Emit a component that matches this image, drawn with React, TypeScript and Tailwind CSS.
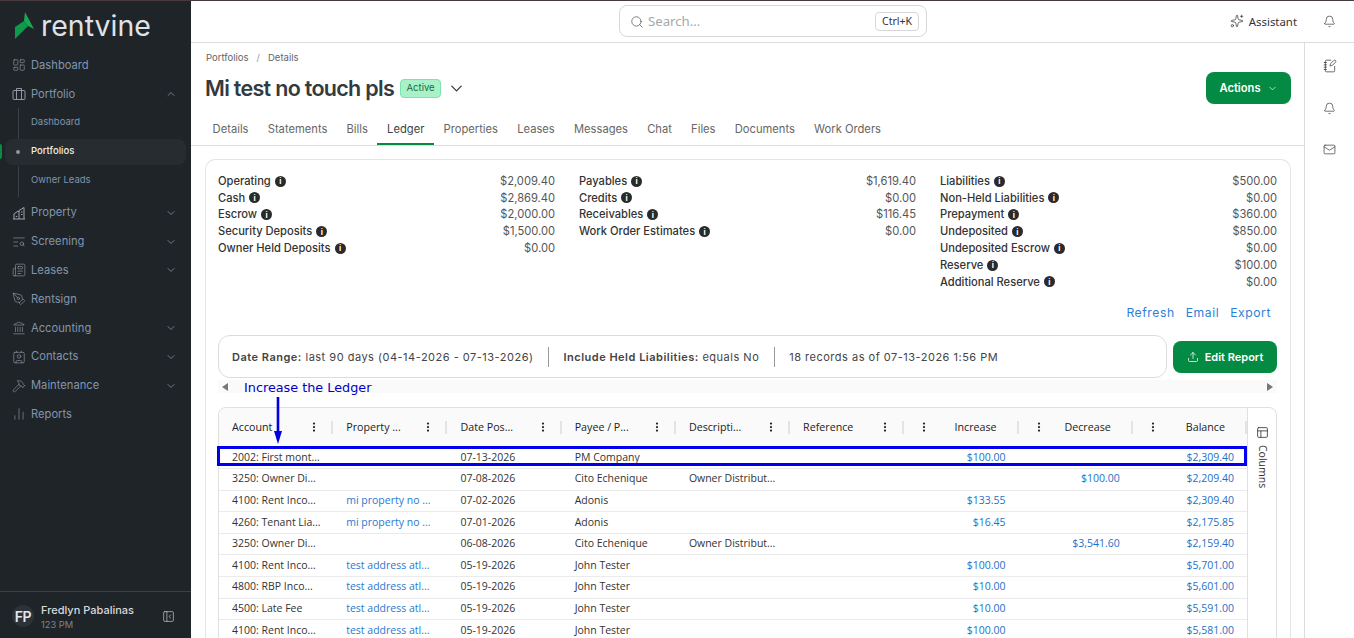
import React from "react";
import {
  LayoutDashboard, ChevronUp, ChevronDown, TextSearch, Newspaper, PenTool, Landmark, Contact, Hammer,
  ChartNoAxesColumn, PanelLeftClose, Search, Bell, Sparkles, NotebookPen, Mail, Upload, EllipsisVertical, PanelsTopLeft,
} from "lucide-react";

const PortfolioIcon = ({ size = 14, className = "" }: { size?: number; strokeWidth?: number; className?: string }) => (
  <svg width={size} height={size} viewBox="0 0 14 14" fill="none" stroke="currentColor" strokeWidth="0.9" className={className}>
    <rect x="1" y="3.5" width="12" height="9" rx="1" />
    <path d="M4.5 3.5V1.5h5v2M4.5 3.5v9M9.5 3.5v9" />
  </svg>
);

const PropertyIcon = ({ size = 14, className = "" }: { size?: number; strokeWidth?: number; className?: string }) => (
  <svg width={size} height={size} viewBox="0 0 14 14" fill="none" stroke="currentColor" strokeWidth="1" className={className}>
    <path d="M1 13h12M2 13V8l4-3 1 .8M7 13V4.5L12 1.5V13M9 6h1.5M9 8.5h1.5M3.8 10.5h1.4" />
  </svg>
);

const NavItem = ({ icon: Icon, label, chevron, up }: { icon: any; label: string; chevron?: boolean; up?: boolean }) => (
  <div className="flex h-[28.8px] items-center pl-[12px] pr-[14px] text-[11.2px] text-[#8196ad]">
    <Icon size={14} strokeWidth={1} className="mr-[5px] text-[#9aa6b2]" />
    <span className="flex-1">{label}</span>
    {chevron && (up ? <ChevronUp size={12} strokeWidth={1.25} className="text-[#a3aeb9]" /> : <ChevronDown size={12} strokeWidth={1.25} className="text-[#a3aeb9]" />)}
  </div>
);

const Sidebar = () => (
  <aside className="flex w-[191px] shrink-0 flex-col bg-[#1f2428] font-['Inter',sans-serif]">
    <div className="flex h-[49px] items-start pl-[15px] pt-[10px]">
      <svg width="20" height="28" viewBox="0 0 20 28" className="mt-[1px]">
        <polygon points="10,0 19,17 13,14 9,9" fill="#16a855" />
        <polygon points="0,15 9,9 13,14 0,27" fill="#0e9a4d" />
      </svg>
      <span className="ml-[6px] text-[28.5px] leading-[30px] font-normal text-[#dfe3e6]">rentvine</span>
    </div>
    <div className="pt-[1px]">
      <NavItem icon={LayoutDashboard} label="Dashboard" />
      <NavItem icon={PortfolioIcon} label="Portfolio" chevron up />
      <div className="relative -mt-[0.5px] flex flex-col text-[9.5px] text-[#7f94ad]">
        <div className="absolute left-[18px] top-[0px] h-[31px] w-px bg-[#3a4047]" />
        <div className="absolute left-[18px] top-[58px] h-[31px] w-px bg-[#3a4047]" />
        <div className="flex h-[29px] items-center pl-[31px]">Dashboard</div>
        <div className="relative mx-[5px] my-[1.5px] flex h-[26px] items-center rounded-lg bg-[#272c31] pl-[26px] font-medium text-[#f1ede0]">
          <span className="absolute left-[11px] h-[4px] w-[4px] rounded-full bg-[#8d96a0]" />
          Portfolios
          <span className="absolute left-[-5px] h-[15px] w-[2px] rounded-r bg-[#0a8a43]" />
        </div>
        <div className="flex h-[29px] items-center pl-[31px]">Owner Leads</div>
      </div>
      <div className="pt-[3.3px]">
        <NavItem icon={PropertyIcon} label="Property" chevron />
        <NavItem icon={TextSearch} label="Screening" chevron />
        <NavItem icon={Newspaper} label="Leases" chevron />
        <NavItem icon={PenTool} label="Rentsign" />
        <NavItem icon={Landmark} label="Accounting" chevron />
        <NavItem icon={Contact} label="Contacts" chevron />
        <NavItem icon={Hammer} label="Maintenance" chevron />
        <NavItem icon={ChartNoAxesColumn} label="Reports" />
      </div>
    </div>
    <div className="mt-auto flex h-[47px] items-center border-t border-[#3a3f44] pl-[12px] pr-[16px] pt-[2px]">
      <div className="flex h-[22px] w-[22px] items-center justify-center rounded-full bg-[#2b3338] text-[14px] font-semibold tracking-[-0.5px] text-[#e5e7eb]">FP</div>
      <div className="ml-[7px] flex-1 pt-[3px] leading-none">
        <div className="text-[11px] font-medium text-[#d7dadd]">Fredlyn Pabalinas</div>
        <div className="mt-[4px] text-[9.3px] text-[#7d848b]">123 PM</div>
      </div>
      <PanelLeftClose size={13} strokeWidth={1.25} className="text-[#c9ced3]" />
    </div>
  </aside>
);

const Header = () => (
  <header className="flex h-[42px] shrink-0 items-center border-b border-[#dcdcdc] bg-white">
    <div className="ml-[428px] -mt-[1px] flex h-[32px] w-[308px] items-center rounded-lg border border-[#d8d8d8] pl-[10px] pr-[7px] pt-[1px]">
      <Search size={14} strokeWidth={1.25} className="text-[#555]" />
      <span className="ml-[4px] flex-1 text-[13.2px] text-[#a3a8ad]">Search...</span>
      <span className="flex h-[19px] w-[44px] items-center justify-center rounded border border-[#d8d8d8] text-[10.5px] text-[#333]">Ctrl+K</span>
    </div>
    <div className="ml-auto flex items-center pr-[18px]">
      <Sparkles size={14} strokeWidth={1.25} className="text-[#333]" />
      <span className="ml-[5px] text-[11.4px] text-[#333]">Assistant</span>
      <Bell size={13} strokeWidth={1.25} className="ml-[26px] text-[#333]" />
    </div>
  </header>
);

const Stat = ({ label, value }: { label: string; value: string }) => (
  <div className="flex h-[16.8px] items-center justify-between">
    <span className="flex items-center font-medium text-[#333]">
      {label}
      <span className="ml-[4px] flex h-[11px] w-[11px] items-center justify-center rounded-full bg-[#2a2a2a] text-[8px] leading-none font-bold text-white">i</span>
    </span>
    <span className="text-[#555]">{value}</span>
  </div>
);

const col1 = [["Operating", "$2,009.40"], ["Cash", "$2,869.40"], ["Escrow", "$2,000.00"], ["Security Deposits", "$1,500.00"], ["Owner Held Deposits", "$0.00"]];
const col2 = [["Payables", "$1,619.40"], ["Credits", "$0.00"], ["Receivables", "$116.45"], ["Work Order Estimates", "$0.00"]];
const col3 = [["Liabilities", "$500.00"], ["Non-Held Liabilities", "$0.00"], ["Prepayment", "$360.00"], ["Undeposited", "$850.00"], ["Undeposited Escrow", "$0.00"], ["Reserve", "$100.00"], ["Additional Reserve", "$0.00"]];

const tabs = ["Details", "Statements", "Bills", "Ledger", "Properties", "Leases", "Messages", "Chat", "Files", "Documents", "Work Orders"];

const heads: [string, boolean][] = [["Account", false], ["Property ...", false], ["Date Pos...", false], ["Payee / P...", false], ["Descripti...", false], ["Reference", false], ["Increase", true], ["Decrease", true], ["Balance", true]];

const rows = [
  ["2002: First mont...", "", "07-13-2026", "PM Company", "", "", "$100.00", "", "$2,309.40"],
  ["3250: Owner Di...", "", "07-08-2026", "Cito Echenique", "Owner Distribut...", "", "", "$100.00", "$2,209.40"],
  ["4100: Rent Inco...", "mi property no ...", "07-02-2026", "Adonis", "", "", "$133.55", "", "$2,309.40"],
  ["4260: Tenant Lia...", "mi property no ...", "07-01-2026", "Adonis", "", "", "$16.45", "", "$2,175.85"],
  ["3250: Owner Di...", "", "06-08-2026", "Cito Echenique", "Owner Distribut...", "", "", "$3,541.60", "$2,159.40"],
  ["4100: Rent Inco...", "test address atl...", "05-19-2026", "John Tester", "", "", "$100.00", "", "$5,701.00"],
  ["4800: RBP Inco...", "test address atl...", "05-19-2026", "John Tester", "", "", "$10.00", "", "$5,601.00"],
  ["4500: Late Fee", "test address atl...", "05-19-2026", "John Tester", "", "", "$10.00", "", "$5,591.00"],
  ["4100: Rent Inco...", "test address atl...", "05-19-2026", "John Tester", "", "", "$100.00", "", "$5,581.00"],
];

const Table = () => (
  <div className="relative mt-[14px] flex rounded-t-lg border border-[#e0e0e0] font-['Open_Sans',sans-serif]">
    <div className="w-[1028px] shrink-0">
      <div className="grid h-[38px] grid-cols-9 items-center rounded-tl-lg bg-[#fafafa] text-[10.7px] font-medium text-[#222]">
        {heads.map(([h, right], i) => (
          <div key={i} className="flex h-[13px] items-center border-r-2 border-[#e4e4e4]">
            {right ? (
              <>
                <EllipsisVertical size={12} strokeWidth={2.5} className="ml-[14px] text-[#222]" />
                <span className="ml-auto mr-[20px]">{h}</span>
              </>
            ) : (
              <>
                <span className="ml-[13px] flex-1">{h}</span>
                <EllipsisVertical size={12} strokeWidth={2.5} className="mr-[11px] text-[#222]" />
              </>
            )}
          </div>
        ))}
      </div>
      {rows.map((r, i) => (
        <div key={i} className="grid h-[21.6px] grid-cols-9 items-center border-t border-[#ebebeb] text-[10.5px] text-[#333]">
          {r.map((c, j) => (
            <div key={j} className={`whitespace-nowrap ${j >= 6 ? "pr-[13px] text-right text-[#1e6fc9]" : "pl-[13px]"} ${j === 1 ? "text-[#2a78d2]" : ""}`}>{c}</div>
          ))}
        </div>
      ))}
    </div>
    <div className="flex flex-1 flex-col items-center border-l border-[#e0e0e0] pt-[18px] text-[#333]">
      <PanelsTopLeft size={13} strokeWidth={1.5} />
      <span className="mt-[6px] text-[10.5px] [writing-mode:vertical-rl]">Columns</span>
    </div>
    <div className="absolute left-[-2px] top-[38px] h-[20px] w-[1030px] border-[3px] border-[#0000ee]" />
    <svg className="absolute left-[53px] top-[-11px]" width="12" height="48" viewBox="0 0 12 48">
      <rect x="4.7" y="0" width="2.6" height="36" fill="#0000e0" />
      <polygon points="2,34 10,34 6,47" fill="#0000e0" />
    </svg>
  </div>
);

const Ledger = () => (
  <section className="mt-[13px] rounded-t-[10px] border border-b-0 border-[#e4e4e4] pl-[12px] pr-[13px] pt-[12.8px] font-['Inter',sans-serif]">
    <div className="grid grid-cols-3 gap-x-[24px] text-[11.15px]">
      <div>{col1.map(([a, b]) => <Stat key={a} label={a} value={b} />)}</div>
      <div>{col2.map(([a, b]) => <Stat key={a} label={a} value={b} />)}</div>
      <div>{col3.map(([a, b]) => <Stat key={a} label={a} value={b} />)}</div>
    </div>
    <div className="mt-[15px] flex h-[16px] items-center justify-end gap-[11px] pr-[6px] text-[12.2px] tracking-[0.55px] text-[#2e7fd9]">
      <span>Refresh</span><span>Email</span><span>Export</span>
    </div>
    <div className="mt-[14px] flex items-center gap-[6px]">
      <div className="flex h-[43px] flex-1 items-center rounded-xl border border-[#dcdcdc] pl-[13px] text-[11px] tracking-[0.5px] text-[#444]">
        <span><b className="font-semibold">Date Range:</b> last 90 days (04-14-2026 - 07-13-2026)</span>
        <span className="mx-[14.5px] h-[20px] w-px bg-[#999]" />
        <span><b className="font-semibold">Include Held Liabilities:</b> equals No</span>
        <span className="mx-[14.5px] h-[20px] w-px bg-[#999]" />
        <span>18 records as of 07-13-2026 1:56 PM</span>
      </div>
      <button className="flex h-[32px] w-[104px] items-center justify-center gap-[6px] rounded-lg bg-[#058a43] text-[11px] font-semibold text-white">
        <Upload size={12} strokeWidth={1.5} />Edit Report
      </button>
    </div>
    <div className="mt-[2px] flex h-[13px] items-center justify-between bg-[#fafafa] px-[4px]">
      <span className="h-0 w-0 border-y-[4.5px] border-r-[6px] border-y-transparent border-r-[#777]" />
      <span className="h-0 w-0 border-y-[4.5px] border-l-[6px] border-y-transparent border-l-[#777]" />
    </div>
    <div className="relative">
      <span className="absolute left-[26px] top-[-27px] font-['DejaVu_Sans',sans-serif] text-[12.8px] leading-[15px] text-[#0000c8]">Increase the Ledger</span>
      <Table />
    </div>
  </section>
);

const Main = () => (
  <main className="min-w-0 flex-1 overflow-hidden pl-[14px] pr-[13px] font-['Inter',sans-serif]">
    <div className="mt-[9.5px] flex h-[12px] items-center pl-[1px] text-[9.5px] text-[#666]">
      <span>Portfolios</span><span className="mx-[8px] text-[#999]">/</span><span>Details</span>
    </div>
    <div className="mt-[7.5px] flex h-[32px] items-center">
      <h1 className="text-[21.5px] font-semibold tracking-[-0.7px] text-[#333a40]">Mi test no touch pls</h1>
      <span className="ml-[6px] flex h-[19px] items-center rounded border border-[#7fe3ae] bg-[#a9f1c8] px-[5.5px] text-[9.5px] text-[#1c6b45]">Active</span>
      <ChevronDown size={19} strokeWidth={1.5} className="ml-[6px] text-[#333]" />
      <button className="ml-auto flex h-[32px] w-[85px] items-center justify-center gap-[6px] rounded-lg bg-[#058a43] text-[11.2px] font-semibold text-white">
        Actions<ChevronDown size={11} strokeWidth={1.5} />
      </button>
    </div>
    <nav className="-mx-[14px] mt-[8px] flex h-[34px] border-b border-[#dcdcdc] pl-[12px] pr-[13px] text-[11.2px] text-[#666]">
      {tabs.map((t) => (
        <div key={t} className={`flex items-center px-[9.6px] ${t === "Ledger" ? "border-b-2 border-[#058a43] pt-[3px] text-[#444]" : "pt-[1px]"}`}>{t}</div>
      ))}
    </nav>
    <Ledger />
  </main>
);

const Rail = () => (
  <aside className="flex w-[50px] shrink-0 flex-col items-center gap-[28.6px] border-l border-[#dcdcdc] pt-[16px] text-[#333]">
    <NotebookPen size={14} strokeWidth={1.25} />
    <Bell size={13} strokeWidth={1.25} />
    <Mail size={13} strokeWidth={1.25} />
  </aside>
);

export default function App() {
  return (
    <div className="flex h-[638px] w-full flex-col overflow-hidden bg-white">
      <div className="h-px shrink-0 bg-[#473a3c]" />
      <div className="flex min-h-0 flex-1">
        <Sidebar />
        <div className="flex min-w-0 flex-1 flex-col">
          <Header />
          <div className="flex min-h-0 flex-1">
            <Main />
            <Rail />
          </div>
        </div>
      </div>
    </div>
  );
}
